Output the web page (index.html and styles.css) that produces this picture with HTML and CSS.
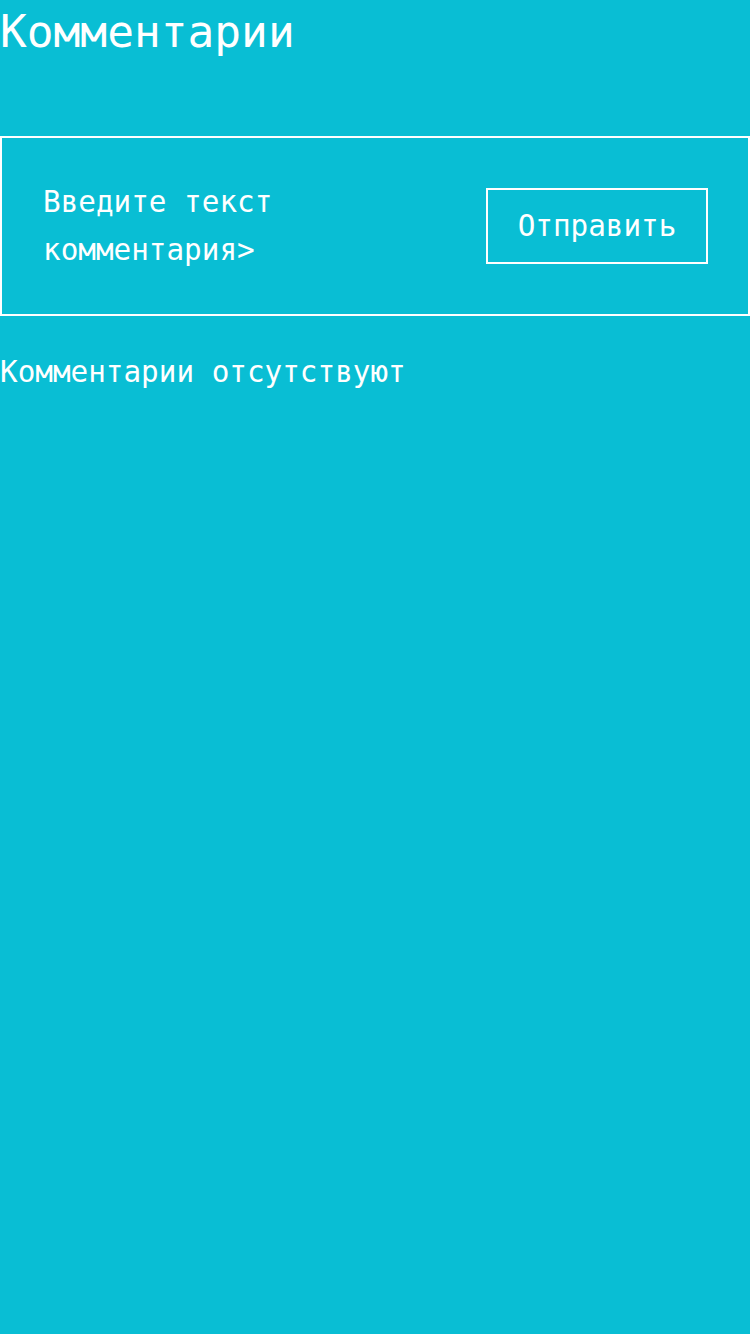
FILE: index.html
```html
<!DOCTYPE html>
<html lang="ru">
<head>
<meta charset="utf-8">
<link rel="stylesheet" href="styles.css">
</head>
<body>
<div class="page">
  <h1 class="title">Комментарии</h1>
  <div class="form">
    <div class="input">Введите текст комментария&gt;</div>
    <button class="send">Отправить</button>
  </div>
  <p class="empty">Комментарии отсутствуют</p>
</div>
</body>
</html>
```
FILE: styles.css
```css
html, body {
  margin: 0;
  padding: 0;
  background: #09bed4;
}
.page {
  width: 750px;
  min-height: 1334px;
  background: #09bed4;
  color: #ffffff;
  font-family: "DejaVu Sans Mono", monospace;
}
.title {
  margin: 0;
  font-weight: normal;
  font-size: 44.5px;
  line-height: 64px;
  height: 136px;
}
.form {
  box-sizing: border-box;
  height: 180px;
  border: 2px solid #ffffff;
  display: flex;
  align-items: center;
  justify-content: space-between;
  padding: 0 40px 0 41px;
}
.input {
  width: 245px;
  font-size: 29.3px;
  line-height: 48px;
}
.send {
  box-sizing: border-box;
  width: 222px;
  height: 76px;
  border: 2px solid #ffffff;
  background: transparent;
  color: #ffffff;
  font-family: "DejaVu Sans Mono", monospace;
  font-size: 29.3px;
  padding: 0;
}
.empty {
  margin: 0;
  padding-top: 38px;
  font-size: 29.3px;
  line-height: 36px;
}
```
